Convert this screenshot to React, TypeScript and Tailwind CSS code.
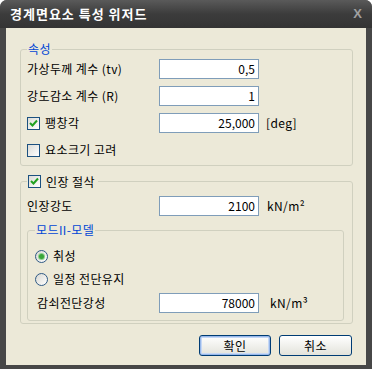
const font = { fontFamily: '"Noto Sans CJK KR", "Liberation Sans", sans-serif' }

function CheckBox({ checked }: { checked?: boolean }) {
  return (
    <span className="w-[13px] h-[13px] shrink-0 border border-[#1c5180] bg-gradient-to-br from-[#dcdcd7] to-white flex items-center justify-center">
      {checked && (
        <svg width="9" height="9" viewBox="0 0 9 9">
          <path d="M1 4 L3.5 6.5 L8 1.5" stroke="#21a121" strokeWidth="2" fill="none" />
        </svg>
      )}
    </span>
  )
}

function Radio({ checked }: { checked?: boolean }) {
  return (
    <span className="w-[13px] h-[13px] shrink-0 rounded-full border border-[#2f5a85] bg-gradient-to-br from-[#d8d8d2] to-white flex items-center justify-center">
      {checked && <span className="w-[5px] h-[5px] rounded-full bg-[#3aa53a] shadow-[0_0_0_1px_#8fd08f]" />}
    </span>
  )
}

function Input({ value }: { value: string }) {
  return (
    <div className="w-[100px] h-[20px] bg-white border border-[#7f9db9] flex items-center justify-end pr-[3px] text-[12px] leading-none tracking-normal">
      {value}
    </div>
  )
}

export default function App() {
  return (
    <div className="w-[372px] h-[369px] bg-[#474747] rounded-t-[7px] flex flex-col overflow-hidden text-black" style={font}>
      {/* title bar */}
      <div className="h-[28px] shrink-0 bg-gradient-to-b from-[#5a5a5a] via-[#3c3c3c] to-[#343434] flex items-center justify-between pl-[10px] pr-[10px]">
        <span className="text-white font-bold text-[13px] tracking-[1px]">경계면요소 특성 위저드</span>
        <span className="text-[#a0a0a0] font-bold text-[13px]" style={{ fontFamily: '"Liberation Sans", sans-serif' }}>X</span>
      </div>
      {/* client */}
      <div className="flex-1 mx-[6px] mb-[4px] bg-[#ece9d8] pl-[14px] pr-[13px] pt-[14px] flex flex-col text-[12px] tracking-[0.4px]">
        <fieldset className="border border-[#d0d0bf] rounded-[3px] pl-[6px] pr-[6px] pt-[3px] pb-[5px]">
          <legend className="px-[1px] text-[#0046d5] leading-[14px]">속성</legend>
          <div className="grid grid-cols-[132px_100px_auto] items-center gap-y-[7px]">
            <span>가상두께 계수 (tv)</span>
            <Input value="0,5" />
            <span />
            <span>강도감소 계수 (R)</span>
            <Input value="1" />
            <span />
            <label className="flex items-center gap-[5px]">
              <CheckBox checked />
              <span>팽창각</span>
            </label>
            <Input value="25,000" />
            <span className="ml-[7px]">[deg]</span>
            <label className="col-span-3 h-[20px] flex items-center gap-[5px]">
              <CheckBox />
              <span>요소크기 고려</span>
            </label>
          </div>
        </fieldset>

        <fieldset className="mt-[8px] border border-[#d0d0bf] rounded-[3px] pl-[6px] pr-[8px] pt-[7px] pb-[2px]">
          <legend className="px-[1px] leading-[15px]">
            <span className="flex items-center gap-[5px] pr-[2px]">
              <CheckBox checked />
              <span>인장 절삭</span>
            </span>
          </legend>
          <div className="grid grid-cols-[132px_100px_auto] items-center">
            <span>인장강도</span>
            <Input value="2100" />
            <span className="ml-[8px]">kN/m²</span>
          </div>
          <fieldset className="mt-[7px] border border-[#d0d0bf] rounded-[3px] pl-[7px] pr-[6px] pt-[9px] pb-[7px]">
            <legend className="px-[1px] text-[#0046d5] leading-[14px]">모드II-모델</legend>
            <div className="flex flex-col">
              <label className="h-[20px] flex items-center gap-[5px]">
                <Radio checked />
                <span>취성</span>
              </label>
              <label className="mt-[3px] h-[20px] flex items-center gap-[5px]">
                <Radio />
                <span>일정 전단유지</span>
              </label>
              <div className="mt-[4px] grid grid-cols-[124px_100px_auto] items-center">
                <span className="pl-[2px]">감쇠전단강성</span>
                <Input value="78000" />
                <span className="ml-[11px]">kN/m³</span>
              </div>
            </div>
          </fieldset>
        </fieldset>

        <div className="mt-[11px] flex justify-end gap-[8px] pr-[1px]">
          <button className="w-[72px] h-[21px] rounded-[3px] border border-[#003c74] bg-gradient-to-b from-white to-[#e3e3db] shadow-[inset_0_0_0_1px_#98b8ea,inset_0_0_0_2px_#c6d8f5] text-[12px] leading-none">
            확인
          </button>
          <button className="w-[73px] h-[21px] rounded-[3px] border border-[#003c74] bg-gradient-to-b from-white to-[#e3e3db] text-[12px] leading-none">
            취소
          </button>
        </div>
      </div>
    </div>
  )
}
